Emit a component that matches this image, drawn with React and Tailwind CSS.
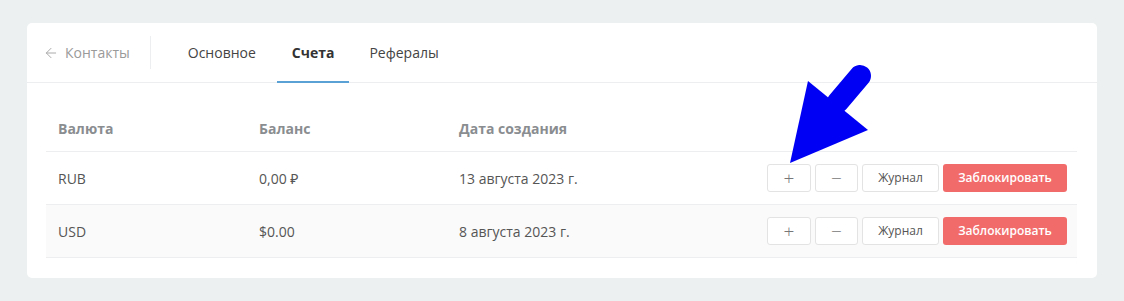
import { ArrowLeft } from 'lucide-react';

const rows = [
  { cur: 'RUB', bal: '0,00 ₽', date: '13 августа 2023 г.' },
  { cur: 'USD', bal: '$0.00', date: '8 августа 2023 г.', alt: true },
];

function Actions() {
  return (
    <div className="flex items-center justify-end gap-1">
      <button className="w-[44px] h-[28px] border border-[#e3e3e3] rounded-[3px] bg-white text-[#777] text-[19px] font-light leading-none flex items-center justify-center">+</button>
      <button className="w-[43px] h-[28px] border border-[#e3e3e3] rounded-[3px] bg-white text-[#777] text-[19px] font-light leading-none flex items-center justify-center">−</button>
      <button className="w-[77px] h-[28px] border border-[#e3e3e3] rounded-[3px] bg-white text-[#555] text-[12px] flex items-center justify-center">Журнал</button>
      <button className="w-[124px] h-[28px] rounded-[3px] bg-[#f26b6b] text-white text-[12px] font-semibold flex items-center justify-center">Заблокировать</button>
    </div>
  );
}

export default function App() {
  return (
    <div className="min-h-[301px] bg-[#ecf0f1] px-[27px] pt-[23px] pb-[24px]" style={{ fontFamily: '"Open Sans", "Noto Sans", sans-serif' }}>
      <div className="relative bg-white rounded-[5px]">
        {/* Header */}
        <div className="h-[60px] flex items-stretch border-b border-[#eceeef] pl-[16px]">
          <div className="flex items-center gap-[6px] text-[14px] text-[#9a9a9a] pr-[20px]">
            <ArrowLeft size={16} strokeWidth={1.5} className="text-[#aaa]" />
            <span>Контакты</span>
          </div>
          <div className="w-px bg-[#eceeef] my-[13px]"></div>
          <div className="flex items-stretch ml-[16px] text-[14px] text-[#444]">
            <div className="flex items-center px-[21px]">Основное</div>
            <div className="flex items-center px-[15px] font-bold text-[#333] border-b-2 border-[#5aa2d6] -mb-px">Счета</div>
            <div className="flex items-center px-[20px]">Рефералы</div>
          </div>
        </div>

        {/* Table */}
        <div className="pl-[19px] pr-[20px] pt-[22px] pb-[20px]">
          <div className="grid grid-cols-[201px_200px_200px_1fr] h-[47px] items-center border-b border-[#eceeef] text-[14px] font-bold text-[#8a8d90]">
            <div className="pl-[12px]">Валюта</div>
            <div className="pl-[12px]">Баланс</div>
            <div className="pl-[12px]">Дата создания</div>
            <div></div>
          </div>
          {rows.map((r) => (
            <div key={r.cur} className={`grid grid-cols-[201px_200px_200px_1fr] h-[53px] items-center border-b border-[#eceeef] text-[14px] text-[#555] ${r.alt ? 'bg-[#fafafa]' : 'bg-white'}`}>
              <div className="pl-[12px]">{r.cur}</div>
              <div className="pl-[12px]">{r.bal}</div>
              <div className="pl-[12px]">{r.date}</div>
              <div className="pr-[10px]"><Actions /></div>
            </div>
          ))}
        </div>

        {/* Annotation arrow */}
        <svg className="absolute left-[713px] top-[17px] pointer-events-none" width="160" height="140" viewBox="0 0 160 140">
          <line x1="98" y1="62" x2="120" y2="36" stroke="#0000f5" strokeWidth="22" strokeLinecap="round" />
          <polygon points="50,123 68,41 128,90" fill="#0000f5" />
        </svg>
      </div>
    </div>
  );
}
